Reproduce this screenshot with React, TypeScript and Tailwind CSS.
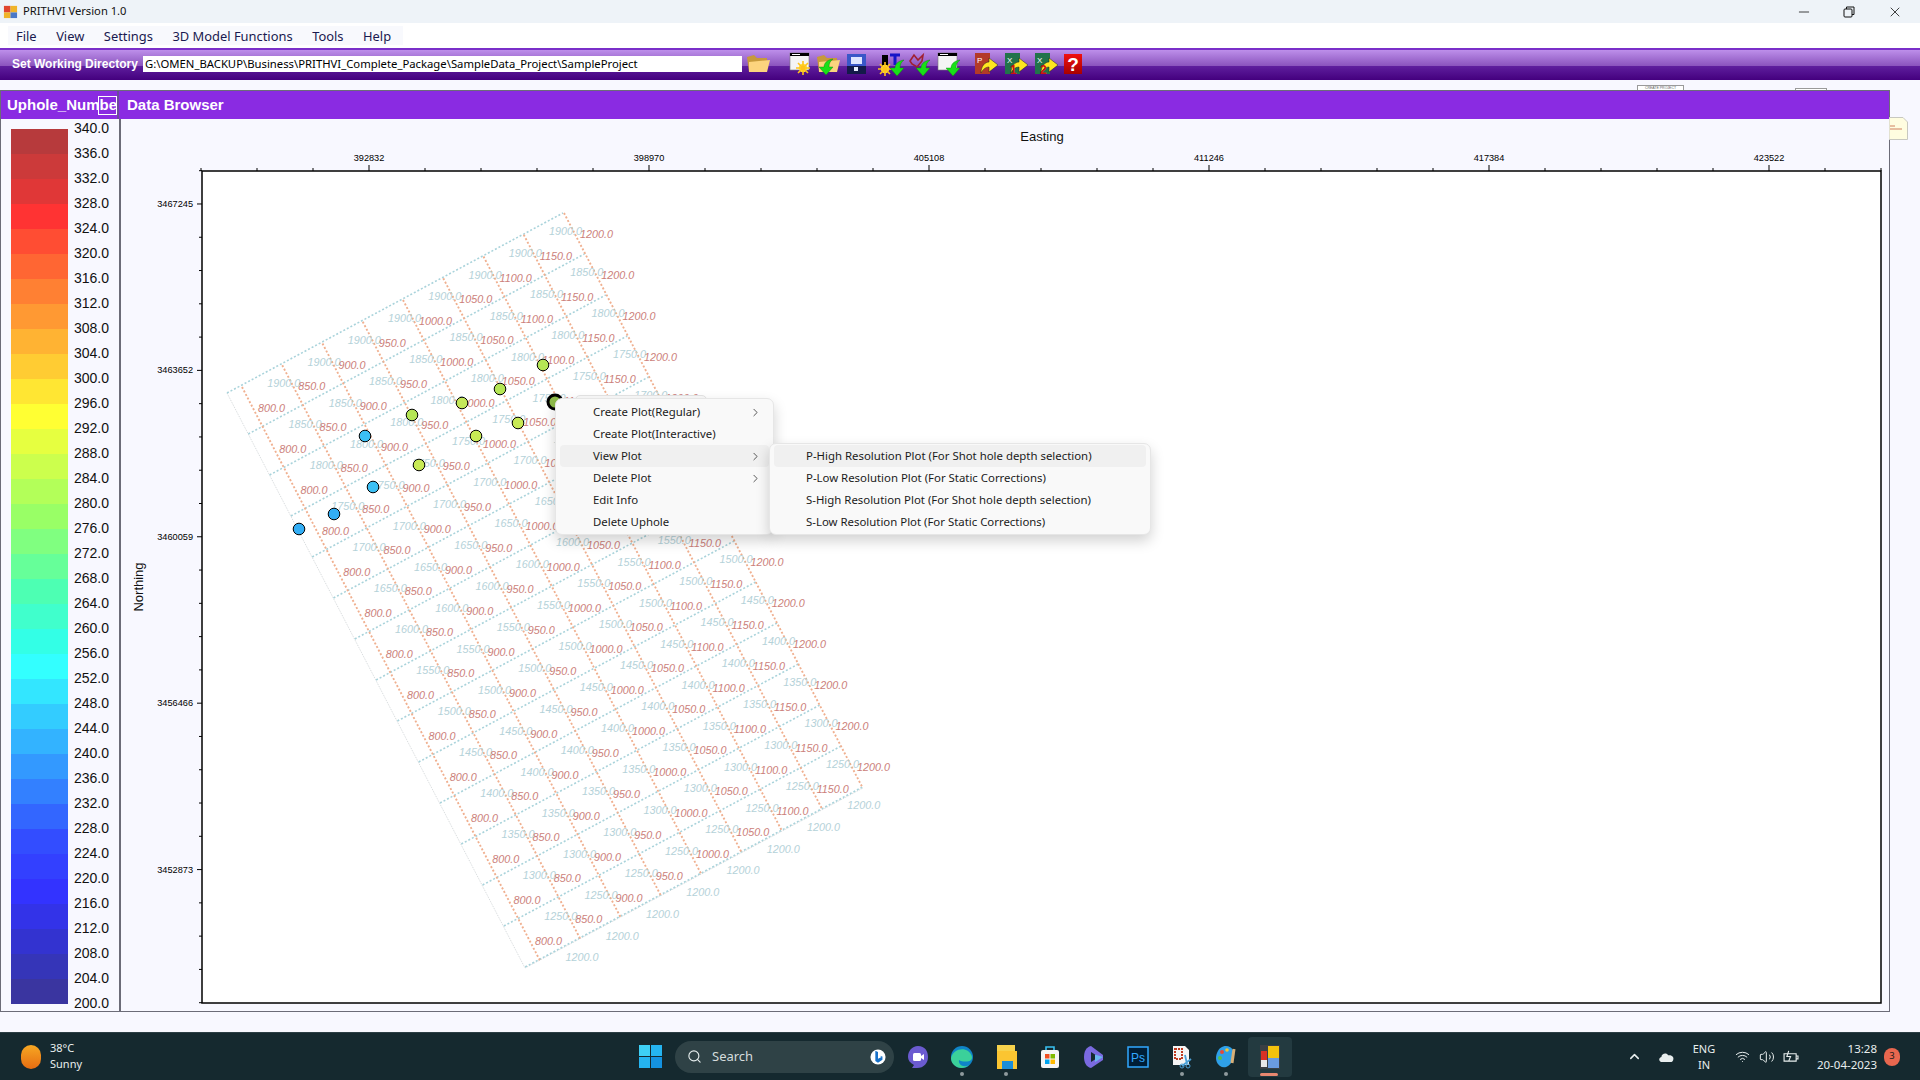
import { ChevronRight, ChevronUp, Minus, Search, Volume2, Wifi, X } from 'lucide-react';

const MENU_ITEMS = ['File', 'View', 'Settings', '3D Model Functions', 'Tools', 'Help'];

const LEGEND_COLORS = [
  '#b73a3c', '#cc3a3a', '#e03737', '#ff3333', '#ff4d33', '#ff6633', '#ff8033',
  '#ff9933', '#ffb333', '#ffcc33', '#ffe633', '#ffff33', '#e6ff40', '#ccff4d',
  '#b3ff59', '#99ff66', '#80ff80', '#66ff99', '#4dffb3', '#40ffcc', '#33ffe6',
  '#33ffff', '#33e6ff', '#33ccff', '#33b3ff', '#3399ff', '#3380ff', '#3366ff',
  '#334dff', '#3340ff', '#3333ff', '#3333e8', '#3333d0', '#3535b8', '#3a35a0',
];

const LEGEND_VALUES = Array.from({ length: 36 }, (_, i) => (340 - i * 4).toFixed(1));

const CONTEXT_ITEMS = [
  { label: 'Create Plot(Regular)', arrow: true },
  { label: 'Create Plot(Interactive)', arrow: false },
  { label: 'View Plot', arrow: true, active: true },
  { label: 'Delete Plot', arrow: true },
  { label: 'Edit Info', arrow: false },
  { label: 'Delete Uphole', arrow: false },
];

const SUB_ITEMS = [
  'P-High Resolution Plot (For Shot hole depth selection)',
  'P-Low Resolution Plot (For Static Corrections)',
  'S-High Resolution Plot (For Shot hole depth selection)',
  'S-Low Resolution Plot (For Static Corrections)',
];

const X_LABELS = ['392832', '398970', '405108', '411246', '417384', '423522'];
const Y_LABELS = ['3467245', '3463652', '3460059', '3456466', '3452873'];

const POINTS = [
  { x: 543, y: 365, fill: '#b5e655' },
  { x: 500, y: 389, fill: '#b5e655' },
  { x: 462, y: 403, fill: '#c4e85a' },
  { x: 412, y: 415, fill: '#b5e655' },
  { x: 365, y: 436, fill: '#3cc0f5' },
  { x: 518, y: 423, fill: '#c8ea55' },
  { x: 476, y: 436, fill: '#c8ea55' },
  { x: 419, y: 465, fill: '#c8ea55' },
  { x: 373, y: 487, fill: '#3cc0f5' },
  { x: 334, y: 514, fill: '#33aef5' },
  { x: 299, y: 529, fill: '#33aef5' },
];

function GridPlot() {
  const red = Array.from({ length: 9 }, (_, i) => i);
  const blue = Array.from({ length: 15 }, (_, j) => j);
  const redAt = (i: number, j: number) => ({ x: 242 + i * 40.25 + j * 21.3, y: 387 - i * 21.75 + j * 41 });

  return (
    <g>
      <path d="M227 393 L525 968 L863 788" fill="none" stroke="#c9ced0" strokeWidth="0.8" strokeDasharray="1 1" />
      {blue.map((j) => (
        <line
          key={j}
          x1={227 + j * 21.3}
          y1={393 + j * 41}
          x2={563 + j * 21.4}
          y2={213 + j * 41}
          stroke="#a9d3db"
          strokeWidth="1.6"
          strokeDasharray="2 2"
        />
      ))}
      {red.map((i) => (
        <line
          key={i}
          x1={redAt(i, 0).x}
          y1={redAt(i, 0).y}
          x2={redAt(i, 14).x}
          y2={redAt(i, 14).y}
          stroke="#f0b090"
          strokeWidth="1.9"
          strokeDasharray="2 2"
        />
      ))}
      <g fontFamily="'Liberation Sans', sans-serif" fontStyle="italic" fontSize="10.8">
        {red.map((i) =>
          blue.map((j) => {
            const p = redAt(i, j);
            return (
              <g key={`${i}-${j}`}>
                {i > 0 && (
                  <text x={p.x - 15} y={p.y + 22} fill="#b5d2d9">
                    {(1900 - j * 50).toFixed(1)}
                  </text>
                )}
                {j < 14 && (
                  <text x={p.x + 16} y={p.y + 25} fill="#cc7f7a">
                    {(800 + i * 50).toFixed(1)}
                  </text>
                )}
              </g>
            );
          })
        )}
      </g>
      <circle cx="555" cy="402" r="7" fill="#8fbc4a" stroke="#000" strokeWidth="3" />
      {POINTS.map((p) => (
        <circle key={`${p.x}-${p.y}`} cx={p.x} cy={p.y} r="5.8" fill={p.fill} stroke="#000" strokeWidth="1" />
      ))}
    </g>
  );
}

function PlotCanvas() {
  const xTicks = Array.from({ length: 31 }, (_, k) => k - 3);
  const yTicks = Array.from({ length: 26 }, (_, i) => i);

  return (
    <svg viewBox="121 119 1768 892" className="block w-[1768px] h-[892px]">
      <rect x="202" y="171" width="1679" height="832" fill="#ffffff" stroke="#000" strokeWidth="1.5" />
      {xTicks.map((k) => {
        const x = 369 + k * 56;
        return <line key={k} x1={x} x2={x} y1={k % 5 === 0 ? 165 : 168} y2="171" stroke="#000" />;
      })}
      {yTicks.map((i) => {
        const y = 170.7 + i * 33.28;
        return <line key={i} x1={(i - 1) % 5 === 0 ? 197 : 199} x2="202" y1={y} y2={y} stroke="#000" />;
      })}
      <g fontFamily="'Liberation Sans', sans-serif" fontSize="9.2" fill="#000">
        {X_LABELS.map((label, k) => (
          <text key={label} x={369 + k * 280} y="161" textAnchor="middle">
            {label}
          </text>
        ))}
        {Y_LABELS.map((label, k) => (
          <text key={label} x="193" y={207 + k * 166.4} textAnchor="end">
            {label}
          </text>
        ))}
      </g>
      <g fontFamily="'Liberation Sans', sans-serif" fontSize="13" fill="#111">
        <text x="1042" y="141" textAnchor="middle">Easting</text>
        <text transform="translate(143 587) rotate(-90)" textAnchor="middle">Northing</text>
      </g>
      <GridPlot />
    </svg>
  );
}

function Legend() {
  return (
    <div className="w-[118px] flex shrink-0 pl-[10px] pt-[10px]">
      <div className="w-[57px] flex flex-col">
        {LEGEND_COLORS.map((color, i) => (
          <div key={i} className="h-[25px] shrink-0" style={{ backgroundColor: color }} />
        ))}
      </div>
      <div className="ml-[6px] -mt-[11px] flex flex-col">
        {LEGEND_VALUES.map((value) => (
          <div key={value} className="h-[25px] shrink-0 leading-[20px] text-[14px] text-[#111]">
            {value}
          </div>
        ))}
      </div>
    </div>
  );
}

function WindowFrame({ children }: { children?: React.ReactNode }) {
  return (
    <>
      <rect x="2" y="1" width="19" height="17" fill="#f4f4f4" stroke="#777" strokeWidth="0.6" />
      <rect x="2" y="1" width="19" height="3" fill="#000" />
      <rect x="4" y="2" width="8" height="1" fill="#fff" />
      {children}
    </>
  );
}

function GreenArrow({ x = 0, y = 0 }: { x?: number; y?: number }) {
  return (
    <path
      transform={`translate(${x} ${y})`}
      d="M17 7 C10 8 8 12 8 15 L3 15 L10 23 L17 15 L13 15 C13 12 14 9 17 7 Z"
      fill="#18e018"
      stroke="#0b7a0b"
      strokeWidth="0.4"
    />
  );
}

function Sun({ cx, cy }: { cx: number; cy: number }) {
  return (
    <g>
      <circle cx={cx} cy={cy} r="4.2" fill="#ffe23a" />
      <path
        d={`M${cx - 7} ${cy} H${cx + 7} M${cx} ${cy - 7} V${cy + 7} M${cx - 5} ${cy - 5} L${cx + 5} ${cy + 5} M${cx - 5} ${cy + 5} L${cx + 5} ${cy - 5}`}
        stroke="#ffc21a"
        strokeWidth="1.6"
      />
    </g>
  );
}

function ToolIcon({ children, className }: { children: React.ReactNode; className?: string }) {
  return (
    <svg viewBox="0 0 24 24" width="24" height="24" className={`shrink-0 overflow-visible ${className ?? ''}`}>
      {children}
    </svg>
  );
}

function FolderShape() {
  return (
    <>
      <path d="M1 5 L8 3 L11 6 L21 6 L21 20 L3 20 Z" fill="#c79a3a" />
      <path d="M3 10 L24 8 L21 20 L3 20 Z" fill="#fcd47e" />
    </>
  );
}

function SheetArrow({ tag, color, number }: { tag: string; color: string; number?: string }) {
  return (
    <>
      <rect x="1" y="1" width="15" height="21" fill={color} />
      <text x="3" y="11" fontSize="8" fill="#fff" fontFamily="'Liberation Sans', sans-serif">{tag}</text>
      <path d="M7 21 C7 14 11 10 15 10 L15 6 L24 13 L15 20 L15 15 C12 15 9 17 7 21 Z" fill="#ffe620" stroke="#222" strokeWidth="0.5" />
      {number && (
        <text x="6" y="22" fontSize="12" fontWeight="700" fill="#d01010" fontFamily="'Liberation Sans', sans-serif">{number}</text>
      )}
    </>
  );
}

function Toolbar() {
  return (
    <div className="h-[32px] flex items-center pl-[12px] bg-[linear-gradient(to_bottom,#7a2fc9_0,#7a2fc9_2px,#bd8fea_2px,#8a53bd_18px,#5f1f9e_18px,#44007e_32px)]">
      <span className="w-[131px] shrink-0 text-[12px] font-bold text-white whitespace-nowrap">
        Set Working Directory
      </span>
      <div className="w-[599px] h-[16px] shrink-0 bg-white pl-[2px] text-[11.3px] leading-[16px] text-black font-['Noto_Sans',sans-serif] whitespace-nowrap overflow-hidden">
        G:\OMEN_BACKUP\Business\PRITHVI_Complete_Package\SampleData_Project\SampleProject
      </div>
      <ToolIcon className="ml-[4px]"><FolderShape /></ToolIcon>
      <ToolIcon className="ml-[18px]"><WindowFrame /><Sun cx={15} cy={16} /></ToolIcon>
      <ToolIcon className="ml-[4px]"><FolderShape /><GreenArrow x={0} y={0} /></ToolIcon>
      <ToolIcon className="ml-[4px]">
        <rect x="3" y="2" width="19" height="20" fill="#3a57c8" />
        <rect x="3" y="14" width="19" height="8" fill="#141a4a" />
        <rect x="7" y="5" width="11" height="7" fill="#dfe6ff" />
        <rect x="10" y="15" width="4" height="4" fill="#e8eeff" />
      </ToolIcon>
      <ToolIcon className="ml-[13px]">
        <rect x="1" y="3" width="6" height="14" fill="#000" />
        <path d="M9 3 H19 M14 3 V13" stroke="#1515c8" strokeWidth="3" />
        <Sun cx={4} cy={17} />
        <GreenArrow x={6} y={1} />
      </ToolIcon>
      <ToolIcon className="ml-[1px]">
        <path d="M4 9 L8 3 L12 8 L17 3 L16 9 L11 15 L6 12 Z" fill="none" stroke="#a02030" strokeWidth="1.6" />
        <GreenArrow x={7} y={1} />
      </ToolIcon>
      <ToolIcon className="ml-[6px]"><WindowFrame /><GreenArrow x={7} y={1} /></ToolIcon>
      <ToolIcon className="ml-[14px]"><SheetArrow tag="P" color="#b33a28" /></ToolIcon>
      <ToolIcon className="ml-[6px]"><SheetArrow tag="X" color="#21734a" number="1" /></ToolIcon>
      <ToolIcon className="ml-[6px]"><SheetArrow tag="X" color="#21734a" number="2" /></ToolIcon>
      <div className="ml-[6px] w-[18px] h-[20px] bg-[linear-gradient(to_bottom,#f01010,#a80000)] flex items-center justify-center text-white font-bold text-[19px] leading-none">
        ?
      </div>
    </div>
  );
}

function ContextMenus() {
  return (
    <>
      <div className="absolute left-[575px] top-[395px] w-[132px] h-[10px] rounded-t-[5px] bg-[#fafafa] border border-[#e4e4e4]" />
      <div className="absolute left-[555px] top-[398px] w-[219px] h-[137px] rounded-[7px] bg-[#f9f9f9] border border-[#e6e6e6] shadow-[0_6px_14px_rgba(0,0,0,0.18)] px-[4px] pt-[2px] font-['Noto_Sans',sans-serif] text-[11.4px] text-[#1b1b1b]">
        {CONTEXT_ITEMS.map((item) => (
          <div
            key={item.label}
            className={`h-[22px] flex items-center rounded-[4px] pl-[33px] pr-[7px] justify-between ${item.active ? 'bg-[#f0f0f0]' : ''}`}
          >
            <span>{item.label}</span>
            {item.arrow && <ChevronRight className="w-[13px] h-[13px] text-[#333]" strokeWidth={1.5} />}
          </div>
        ))}
      </div>
      <div className="absolute left-[769px] top-[443px] w-[382px] h-[92px] rounded-[7px] bg-[#f9f9f9] border border-[#e6e6e6] shadow-[0_6px_14px_rgba(0,0,0,0.18)] px-[4px] pt-[1px] font-['Noto_Sans',sans-serif] text-[11.4px] text-[#1b1b1b]">
        {SUB_ITEMS.map((item, i) => (
          <div key={item} className={`h-[22px] flex items-center rounded-[4px] pl-[32px] ${i === 0 ? 'bg-[#f0f0f0]' : ''}`}>
            {item}
          </div>
        ))}
      </div>
    </>
  );
}

function TaskIcon({ children, dot, active }: { children: React.ReactNode; dot?: boolean; active?: boolean }) {
  return (
    <div className={`relative w-[44px] h-[40px] flex items-center justify-center rounded-[4px] ${active ? 'bg-[#233a40]' : ''}`}>
      <svg viewBox="0 0 24 24" className="w-[24px] h-[24px]">
        {children}
      </svg>
      {dot && <span className="absolute bottom-[1px] left-[20px] w-[4px] h-[4px] rounded-full bg-[#8f9a9e]" />}
      {active && <span className="absolute bottom-[1px] left-[12px] w-[18px] h-[3px] rounded-full bg-[#e88870]" />}
    </div>
  );
}

function Taskbar() {
  return (
    <div className="h-[48px] shrink-0 flex items-center bg-[#15292f] border-t border-[#2c3e44] text-white font-['Noto_Sans',sans-serif]">
      <div className="w-[21px] shrink-0" />
      <div className="w-[20px] h-[24px] shrink-0 rounded-full bg-[linear-gradient(to_bottom,#f7a823,#e66c12)]" />
      <div className="ml-[9px] w-[589px] shrink-0 text-[11px] leading-[16px] text-[#e8eeee] -mt-[1px]">
        <div>38°C</div>
        <div>Sunny</div>
      </div>
      <div className="w-[23px] h-[23px] shrink-0 grid grid-cols-2 gap-[1px]">
        <span className="bg-[#3ed0f5]" />
        <span className="bg-[#25b4f0]" />
        <span className="bg-[#25b4f0]" />
        <span className="bg-[#1492e0]" />
      </div>
      <div className="ml-[13px] w-[219px] h-[32px] shrink-0 rounded-full bg-[#2f4246] flex items-center pl-[12px] pr-[8px]">
        <Search className="w-[15px] h-[15px] text-[#e6eeee]" strokeWidth={1.8} />
        <span className="ml-[10px] text-[13px] text-[#d5dcdc] flex-1">Search</span>
        <svg viewBox="0 0 18 20" className="w-[16px] h-[18px]">
          <circle cx="9" cy="10" r="8.5" fill="#fff" />
          <path d="M6 3 L9 4.5 V12 L13 10 L11 8.5 L14 9.5 V13 L9 16.5 L6 14.5 Z" fill="#1771c9" />
        </svg>
      </div>
      <div className="ml-[2px] flex items-center">
        <TaskIcon>
          <path d="M12 1 C19 1 22 6 22 12 C22 18 18 23 11 23 L6 23 L8 20 C4 18 2 15 2 12 C2 6 6 1 12 1 Z" fill="#6b5bd0" />
          <rect x="7" y="8" width="8" height="8" rx="1.5" fill="#fff" />
          <path d="M15 11 L18 9 V15 L15 13 Z" fill="#fff" />
        </TaskIcon>
        <TaskIcon dot>
          <circle cx="12" cy="12" r="11" fill="#0f84c8" />
          <path d="M1 13 C3 5 12 2 18 6 C22 9 23 13 21 15 C19 17 12 17 9 15 C8 20 14 23 19 20 C15 24 8 24 4 20 C2 18 1 16 1 13 Z" fill="#3bd09a" />
        </TaskIcon>
        <TaskIcon dot>
          <path d="M3 0 H21 V16 H3 Z" fill="#f6d24c" />
          <path d="M3 6 H23 V24 H3 Z" fill="#fbc531" />
          <rect x="8" y="16" width="11" height="8" fill="#1c8ed8" />
        </TaskIcon>
        <TaskIcon>
          <path d="M8 5 V2 H16 V5" fill="none" stroke="#38c0f0" strokeWidth="1.6" />
          <rect x="3" y="5" width="18" height="18" rx="2" fill="#f5f5f5" />
          <rect x="7" y="9" width="4.5" height="4.5" fill="#f25022" />
          <rect x="12.5" y="9" width="4.5" height="4.5" fill="#7fba00" />
          <rect x="7" y="14.5" width="4.5" height="4.5" fill="#00a4ef" />
          <rect x="12.5" y="14.5" width="4.5" height="4.5" fill="#ffb900" />
        </TaskIcon>
        <TaskIcon>
          <path d="M9 1 L21 10 V15 L9 23 C4 22 2 17 2 12 C2 7 4 2 9 1 Z" fill="#7a6ae0" />
          <path d="M9 7 L17 12 L9 17 Z" fill="#15292f" />
          <path d="M13 9.5 L21 12 L13 17 Z" fill="#6ab8f0" />
        </TaskIcon>
        <TaskIcon>
          <rect x="2" y="2" width="20" height="20" fill="#001e36" stroke="#31a8ff" strokeWidth="1.5" />
          <text x="5" y="17" fontSize="12" fill="#31a8ff" fontFamily="'Liberation Sans', sans-serif">Ps</text>
        </TaskIcon>
        <TaskIcon dot>
          <path d="M3 1 H15 L19 5 V20 H3 Z" fill="#f5f5f5" />
          <rect x="5" y="4" width="7" height="10" fill="none" stroke="#c03a20" strokeWidth="2" strokeDasharray="2 1" />
          <path d="M15 10 L17 19 M21 14 L12 21" stroke="#4aa0d8" strokeWidth="1.8" />
          <circle cx="12" cy="21" r="2" fill="none" stroke="#4aa0d8" />
          <circle cx="18" cy="21" r="2" fill="none" stroke="#4aa0d8" />
        </TaskIcon>
        <TaskIcon dot>
          <path d="M12 1 C18 1 21 6 19 13 C17 22 10 24 6 21 C2 18 1 13 3 8 C5 3 8 1 12 1 Z" fill="#2fa0e8" />
          <circle cx="8" cy="7" r="2" fill="#e8483a" />
          <circle cx="13" cy="5" r="1.8" fill="#f7c431" />
          <circle cx="6" cy="13" r="2" fill="#56c04a" />
          <path d="M20 4 L18 18" stroke="#d8b078" strokeWidth="3" />
        </TaskIcon>
        <TaskIcon active>
          <rect x="2" y="0" width="20" height="24" fill="#3a3f44" />
          <rect x="10" y="1" width="11" height="12" fill="#f4c20d" />
          <rect x="10" y="13" width="11" height="10" fill="#6a9be0" />
          <rect x="3" y="6" width="6" height="9" fill="#d93025" />
          <rect x="3" y="15" width="6" height="7" fill="#e8e8e8" />
        </TaskIcon>
      </div>
      <div className="ml-auto flex items-center text-[#e8eeee]">
        <ChevronUp className="w-[15px] h-[15px]" strokeWidth={2.4} />
        <svg viewBox="0 0 20 14" className="ml-[16px] w-[17px] h-[12px]">
          <path d="M5 13 C1 13 0 8 4 7 C4 3 10 1 12 5 C16 4 19 7 18 10 C18 12 16 13 15 13 Z" fill="#e8eeee" />
        </svg>
        <div className="ml-[17px] w-[24px] text-center text-[11px] leading-[16px]">
          <div>ENG</div>
          <div>IN</div>
        </div>
        <Wifi className="ml-[19px] w-[15px] h-[15px]" strokeWidth={1.6} />
        <Volume2 className="ml-[9px] w-[16px] h-[16px]" strokeWidth={1.5} />
        <svg viewBox="0 0 18 14" className="ml-[8px] w-[17px] h-[13px]">
          <path d="M1 4 H14 V12 H1 Z M14 6.5 H16 V9.5 H14 M6 1 L4 7 H8 L6 12" fill="none" stroke="#e8eeee" strokeWidth="1.2" />
        </svg>
        <div className="ml-[12px] w-[65px] text-right text-[11.5px] leading-[16px] whitespace-nowrap">
          <div>13:28</div>
          <div>20-04-2023</div>
        </div>
        <div className="ml-[7px] mr-[20px] w-[16px] h-[18px] rounded-full bg-[#e8674f] text-[#1a1a1a] text-[9.5px] flex items-center justify-center">
          3
        </div>
      </div>
    </div>
  );
}

export default function App() {
  return (
    <div className="relative w-[1920px] h-[1080px] overflow-hidden flex flex-col bg-[#f8f8ff] font-['Liberation_Sans',sans-serif]">
      {/* Title bar */}
      <div className="h-[23px] shrink-0 flex items-center bg-[#eef3f8] pl-[3px] font-['Noto_Sans',sans-serif] text-[11.2px] text-[#111]">
        <svg viewBox="0 0 16 16" className="w-[15px] h-[15px]">
          <rect x="1" y="2" width="7" height="7" fill="#e0452e" />
          <rect x="8" y="2" width="7" height="7" fill="#f0b429" />
          <rect x="1" y="9" width="7" height="6" fill="#f0b429" />
          <rect x="8" y="9" width="7" height="6" fill="#4a78c8" />
        </svg>
        <span className="ml-[5px]">PRITHVI Version 1.0</span>
        <div className="ml-auto flex items-center text-[#111]">
          <Minus className="w-[16px] h-[16px] mr-[31px]" strokeWidth={1.2} />
          <svg viewBox="0 0 12 12" className="w-[12px] h-[12px] mr-[32px]">
            <rect x="1" y="3" width="8" height="8" rx="1" fill="none" stroke="#111" />
            <path d="M3.5 3 V1 H11 V8.5 H9" fill="none" stroke="#111" />
          </svg>
          <X className="w-[16px] h-[16px] mr-[17px]" strokeWidth={1.2} />
        </div>
      </div>

      {/* Menu */}
      <div className="h-[25px] shrink-0 bg-white pl-[8px] pt-[3px]">
        <div className="w-[395px] h-[19px] flex items-center gap-[19.5px] pl-[8px] pt-[2px] bg-[#f8f9fd] font-['Noto_Sans',sans-serif] text-[12.9px] text-[#1a1a50]">
          {MENU_ITEMS.map((item) => (
            <span key={item}>{item}</span>
          ))}
        </div>
      </div>

      <Toolbar />

      <div className="relative h-[10px] shrink-0">
        <div className="absolute left-[1637px] top-[5px] w-[47px] h-[8px] border border-[#9a9a9a] bg-white text-[3.5px] leading-[5px] text-center text-[#666] overflow-hidden whitespace-nowrap">
          CREATE PROJECT
        </div>
        <div className="absolute left-[1795px] top-[8px] w-[32px] h-[4px] border border-[#9a9a9a] bg-white" />
      </div>

      {/* Main panel */}
      <div className="relative w-[1890px] h-[922px] shrink-0 flex flex-col border border-[#6c6c78] bg-[#f8f8ff]">
        <div className="h-[28px] shrink-0 flex items-center bg-[#8a2be2] text-white font-bold text-[15px]">
          <div className="relative w-[118px] h-full flex items-center pl-[6px] overflow-hidden whitespace-nowrap border-r-2 border-[#6c4a9c]">
            Uphole_Number
            <span className="absolute left-[97px] top-[5px] w-[19px] h-[19px] border border-white" />
          </div>
          <span className="ml-[8px]">Data Browser</span>
        </div>
        <div className="flex flex-1 min-h-0 overflow-hidden">
          <div className="flex border-r-2 border-[#6c6c78]">
            <Legend />
          </div>
          <PlotCanvas />
        </div>
      </div>

      <div className="flex-1" />
      <Taskbar />

      {/* Note tab peeking out from behind the panel */}
      <svg viewBox="0 0 19 23" className="absolute left-[1889px] top-[117px] w-[19px] h-[23px]">
        <path d="M0 0.5 H14 L18.5 5 V22.5 H0 Z" fill="#fffde0" stroke="#c8c8c0" />
        <path d="M1 9 H6 M1 12 H13" stroke="#d08060" strokeWidth="1" />
      </svg>

      <ContextMenus />
    </div>
  );
}
